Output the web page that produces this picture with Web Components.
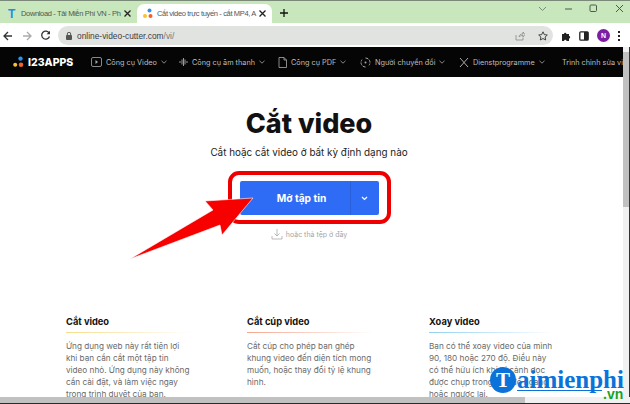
<!DOCTYPE html>
<html>
<head>
<meta charset="utf-8">
<style>
  html, body { margin: 0; padding: 0; width: 630px; height: 404px; overflow: hidden; background: #fff; }
  body { font-family: Inter, "Noto Sans", sans-serif; position: relative; }
</style>
</head>
<body>
<browser-window>
  <tab-strip></tab-strip>
  <address-bar></address-bar>
  <div style="display:flex;flex:1;min-height:0">
    <div style="flex:1;min-width:0;overflow:hidden">
      <site-nav></site-nav>
      <hero-panel></hero-panel>
      <info-columns></info-columns>
    </div>
    <v-scroll></v-scroll>
  </div>
  <h-scroll></h-scroll>
</browser-window>
<call-out></call-out>
<brand-mark></brand-mark>

<script>
class BrowserWindow extends HTMLElement {
  connectedCallback() {
    this.attachShadow({ mode: 'open' });
    this.shadowRoot.innerHTML = `
      <style>
        :host { display: flex; flex-direction: column; width: 630px; height: 404px; overflow: hidden; background: #fff; border-top: 1px solid #7b8a78; box-sizing: border-box; }
      </style>
      <slot></slot>`;
  }
}

class TabStrip extends HTMLElement {
  connectedCallback() {
    this.attachShadow({ mode: 'open' });
    const close = `<svg width="9" height="9" viewBox="0 0 9 9"><path d="M1.500 1.500l6 6M7.500 1.500l-6 6" stroke="#222" stroke-width="1.300"/></svg>`;
    this.shadowRoot.innerHTML = `
      <style>
        :host { display: flex; height: 22px; background: #c9e7bd; align-items: flex-end; flex: none; color: #4c5a4e; font: 7.500px "Liberation Sans", sans-serif; letter-spacing: -.35px; }
        .tab { height: 19px; display: flex; align-items: center; box-sizing: border-box; white-space: nowrap; }
        .first { width: 137px; padding: 0 5px 0 8px; }
        .on { width: 135px; padding: 0 5px 0 6px; background: #fff; border-radius: 7px 7px 0 0; color: #50565a; }
        .t { flex: 1; overflow: hidden; }
        .fav-t { color: #1b8fe6; font: bold 12px "Liberation Sans", sans-serif; width: 13px; flex: none; }
        .on svg:first-child { margin-right: 4px; }
        .plus { margin: 0 0 3px 8px; height: 15px; }
        .sp { flex: 1; }
        .ctl { display: flex; align-items: center; gap: 16.500px; height: 15px; align-self: flex-start; padding-right: 6.500px; }
        svg { display: block; flex: none; }
      </style>
      <div class="tab first">
        <span class="fav-t">T</span><span class="t">Download - Tải Miễn Phí VN - Ph</span>${close}
      </div>
      <div class="tab on">
        <svg width="10" height="12" viewBox="0 0 10 12"><circle cx="6.500" cy="2.500" r="2" fill="#2e90f0"/><circle cx="2" cy="8" r="2" fill="#f7c32e"/><circle cx="7.500" cy="8" r="2" fill="#f2602d"/></svg>
        <span class="t">Cắt video trực tuyến - cắt MP4, A</span>${close}
      </div>
      <div class="plus">
        <svg width="8" height="8" viewBox="0 0 8 8" style="margin:4px 0 0 0"><path d="M4 0v8M0 4h8" stroke="#111" stroke-width="1.300"/></svg>
      </div>
      <div class="sp"></div>
      <div class="ctl">
        <svg width="9" height="6" viewBox="0 0 9 6"><path d="M1 1l3.500 3.500L8 1" fill="none" stroke="#7b8a78" stroke-width="1"/></svg>
        <svg width="9" height="2" viewBox="0 0 9 2"><path d="M1 1h7" stroke="#4b5a4c" stroke-width="1"/></svg>
        <svg width="9" height="9" viewBox="0 0 9 9"><rect x="1" y="1" width="6.500" height="6.500" rx="1" fill="none" stroke="#4b5a4c"/></svg>
        <svg width="9" height="9" viewBox="0 0 9 9"><path d="M1 1l7 7M8 1L1 8" stroke="#4b5a4c" stroke-width="1"/></svg>
      </div>`;
  }
}

class AddressBar extends HTMLElement {
  connectedCallback() {
    this.attachShadow({ mode: 'open' });
    this.shadowRoot.innerHTML = `
      <style>
        :host { display: flex; align-items: center; height: 24px; background: #fff; flex: none; padding: 3px 8px 2px 3px; box-sizing: border-box; }
        svg { display: block; flex: none; }
        .arrows { display: flex; align-items: center; gap: 9px; width: 55px; }
        .omni { width: 495px; height: 19px; border-radius: 10px; background: #e1e3e1; display: flex; align-items: center; padding: 0 5px 0 8px; box-sizing: border-box; gap: 5px; font: 8.400px "Liberation Sans", sans-serif; color: #3c4043; }
        .omni i { font-style: normal; color: #70757a; }
        .sp { flex: 1; }
        .tools { display: flex; align-items: center; gap: 8px; margin-left: 8px; }
        .av { width: 13px; height: 13px; border-radius: 50%; background: #7b1fa2; color: #fff; font: bold 7px/13px "Liberation Sans", sans-serif; text-align: center; }
        .dots { width: 2px; height: 10px; background: radial-gradient(circle at 1px 1px, #222 1px, transparent 1.100px) 0 0/2px 4px; }
      </style>
      <div class="arrows">
        <svg width="10" height="10" viewBox="0 0 10 10"><path d="M9 5H1.500M5 1L1 5l4 4" fill="none" stroke="#333" stroke-width="1.300"/></svg>
        <svg width="10" height="10" viewBox="0 0 10 10"><path d="M1 5h7.500M5 1l4 4-4 4" fill="none" stroke="#a9adaa" stroke-width="1.300"/></svg>
        <svg width="11" height="11" viewBox="0 0 11 11" style="margin-left:-1px"><path d="M9.200 3.200A4 4 0 1 0 9.500 6.500" fill="none" stroke="#333" stroke-width="1.300"/><path d="M10 .800v3.400H6.600z" fill="#333"/></svg>
      </div>
      <div class="omni">
        <svg width="6" height="8" viewBox="0 0 6 8"><rect y="3" width="6" height="5" rx="1" fill="#555"/><path d="M1.300 3.500V2a1.700 1.700 0 0 1 3.400 0v1.500" fill="none" stroke="#555"/></svg>
        <span>online-video-cutter.com<i>/vi/</i></span>
        <span class="sp"></span>
        <svg width="10" height="10" viewBox="0 0 10 10" style="margin-right:8px"><path d="M1 4v5h7V6.500M4 6c0-2 1.500-3 4-3V1l2 2.500L8 6V4.500C6 4.500 5 5 4 6z" fill="none" stroke="#888" stroke-width=".8"/></svg>
        <svg width="10" height="10" viewBox="0 0 10 10"><path d="M5 .800l1.300 2.800 3 .4-2.200 2 .6 3L5 7.500 2.300 9l.6-3L.7 4l3-.4z" fill="none" stroke="#444" stroke-width="1"/></svg>
      </div>
      <div class="tools">
        <svg width="10" height="10" viewBox="0 0 10 10"><path d="M1 3h2a1.200 1.200 0 1 1 2.400 0H8v2a1.200 1.200 0 1 1 0 2.400V10H5.500a1.200 1.200 0 1 0-2.400 0H1z" fill="#222"/></svg>
        <svg width="10" height="10" viewBox="0 0 10 10"><rect x=".8" y=".8" width="8.400" height="8.400" rx="1" fill="#fff" stroke="#222" stroke-width="1.300"/><rect x="5" y="1" width="4" height="8" fill="#222"/></svg>
        <div class="av">N</div>
        <div class="dots"></div>
      </div>`;
  }
}

class SiteNav extends HTMLElement {
  connectedCallback() {
    this.attachShadow({ mode: 'open' });
    const chev = `<svg width="6" height="4" viewBox="0 0 6 4"><path d="M.5.800L3 3.200 5.500.800" fill="none" stroke="#aaa" stroke-width=".8"/></svg>`;
    this.shadowRoot.innerHTML = `
      <style>
        :host { display: flex; align-items: center; height: 30px; background: #050505; color: #bdbdbd; font: 7.300px Inter, sans-serif; overflow: hidden; white-space: nowrap; padding-left: 13px; }
        svg { display: block; flex: none; }
        .logo { display: flex; align-items: center; gap: 4px; color: #fff; font: 800 10.500px Inter, sans-serif; width: 78px; flex: none; }
        .item { display: flex; align-items: center; gap: 4px; flex: none; }
      </style>
      <div class="logo">
        <svg width="11" height="12" viewBox="0 0 11 12"><circle cx="7.500" cy="2.600" r="2.200" fill="#2e90f0"/><circle cx="2.200" cy="8.800" r="2" fill="#f7c32e"/><circle cx="8" cy="8.800" r="2.300" fill="#f2602d"/></svg>
        <span>I23APPS</span>
      </div>
      <div class="item" style="width:88px"><svg width="11" height="10" viewBox="0 0 11 10"><rect x=".5" y=".5" width="10" height="9" rx="1.500" fill="none" stroke="#aaa" stroke-width=".8"/><path d="M4.500 3l2.500 2-2.500 2z" fill="#aaa"/></svg>Công cụ Video ${chev}</div>
      <div class="item" style="width:99px"><svg width="9" height="10" viewBox="0 0 9 10"><path d="M1 4v2M3 2.500v5M4.500 1v8M6 2.500v5M8 4v2" stroke="#999" stroke-width="1"/></svg>Công cụ âm thanh ${chev}</div>
      <div class="item" style="width:82px"><svg width="9" height="11" viewBox="0 0 9 11"><path d="M1 .500h5l2.500 2.500v7.500H1zM6 .500V3h2.500" fill="none" stroke="#aaa" stroke-width=".8"/></svg>Công cụ PDF ${chev}</div>
      <div class="item" style="width:99px"><svg width="11" height="11" viewBox="0 0 11 11"><path d="M5.500 1a4.500 4.500 0 0 1 3.500 7.300M5.500 10A4.500 4.500 0 0 1 2 2.700" fill="none" stroke="#aaa" stroke-dasharray="3 1"/><circle cx="5.500" cy="5.500" r="1" fill="#aaa"/></svg>Người chuyển đổi ${chev}</div>
      <div class="item" style="width:103px"><svg width="10" height="11" viewBox="0 0 10 11"><path d="M1 1l8 9M9 1L1 10" stroke="#aaa" stroke-width="1"/></svg>Dienstprogramme ${chev}</div>
      <div class="item">Trình chỉnh sửa vid</div>`;
  }
}

class HeroPanel extends HTMLElement {
  connectedCallback() {
    this.attachShadow({ mode: 'open' });
    this.shadowRoot.innerHTML = `
      <style>
        :host { display: flex; flex-direction: column; align-items: center; padding: 29px 5px 0 0; color: #111; }
        h1 { margin: 0; font: 800 27px/36px Inter, sans-serif; }
        p { margin: 3px 0 0; font: 9.900px/14px Inter, sans-serif; color: #222; }
        .btn { margin-top: 22px; width: 139px; height: 34px; background: #2f6cf6; border-radius: 2px; display: flex; color: #fff; font: 700 10.200px/34px Inter, sans-serif; text-align: center; }
        .btn b { flex: 1; font-weight: 700; padding-left: 14px; }
        .btn span { width: 28px; border-left: 1px solid #2a60dc; display: flex; align-items: center; justify-content: center; }
        .drop { margin-top: 13px; display: flex; align-items: center; gap: 3px; font: 7px Inter, sans-serif; color: #a6a6a6; height: 12px; }
        svg { display: block; }
      </style>
      <h1>Cắt video</h1>
      <p>Cắt hoặc cắt video ở bất kỳ định dạng nào</p>
      <div class="btn"><b>Mở tập tin</b><span><svg width="7" height="5" viewBox="0 0 7 5"><path d="M1 1l2.500 2.500L6 1" fill="none" stroke="#fff" stroke-width="1.200"/></svg></span></div>
      <div class="drop"><svg width="12" height="12" viewBox="0 0 12 12"><path d="M6 1v7M3.500 5.500L6 8l2.500-2.500M1 8v3h10V8" fill="none" stroke="#aaa" stroke-width=".8"/></svg>hoặc thả tệp ở đây</div>`;
  }
}

class InfoColumns extends HTMLElement {
  connectedCallback() {
    this.attachShadow({ mode: 'open' });
    this.shadowRoot.innerHTML = `
      <style>
        :host { display: grid; grid-template-columns: 124px 125px 125px; column-gap: 57px; padding: 75px 0 0 66px; }
      </style>
      <slot></slot>`;
    this.innerHTML = `
      <info-col heading="Cắt video" tone="#f7dc8a">Ứng dụng web này rất tiện lợi<br>khi bạn cần cắt một tập tin<br>video nhỏ. Ứng dụng này không<br>cần cài đặt, và làm việc ngay<br>trong trình duyệt của bạn.</info-col>
      <info-col heading="Cắt cúp video" tone="#f6a58e">Cắt cúp cho phép bạn ghép<br>khung video đến diện tích mong<br>muốn, hoặc thay đổi tỷ lệ khung<br>hình.</info-col>
      <info-col heading="Xoay video" tone="#8fd0f2">Bạn có thể xoay video của mình<br>90, 180 hoặc 270 độ. Điều này<br>có thể hữu ích khi bị cảnh dọc<br>được chụp trong chế độ ngang<br>hoặc ngược lại.</info-col>`;
  }
}

class InfoCol extends HTMLElement {
  connectedCallback() {
    const tone = this.getAttribute('tone');
    this.attachShadow({ mode: 'open' });
    this.shadowRoot.innerHTML = `
      <style>
        :host { display: block; }
        h3 { margin: 0; font: 700 9.300px/14px Inter, sans-serif; color: #111; padding-bottom: 3px; border-bottom: 1px solid transparent; border-image: linear-gradient(90deg, ${tone}, #fff) 1; }
        div { margin-top: 7px; font: 8.200px/12px Inter, sans-serif; color: #6a6a6a; white-space: nowrap; }
      </style>
      <h3>${this.getAttribute('heading')}</h3>
      <div><slot></slot></div>`;
  }
}

class VScroll extends HTMLElement {
  connectedCallback() {
    this.attachShadow({ mode: 'open' });
    this.shadowRoot.innerHTML = `
      <style>
        :host { display: block; width: 6px; flex: none; background: #f1f1f1; border-right: 1px solid #333; padding-top: 5px; }
        div { height: 155px; background: #c1c1c1; }
      </style>
      <div></div>`;
  }
}

class HScroll extends HTMLElement {
  connectedCallback() {
    this.attachShadow({ mode: 'open' });
    this.shadowRoot.innerHTML = `
      <style>
        :host { display: block; height: 7px; flex: none; background: #f1f1f1; border-bottom: 1px solid #2a2a2a; box-sizing: border-box; }
        div { width: 525px; height: 100%; background: #c1c1c1; }
      </style>
      <div></div>`;
  }
}

class CallOut extends HTMLElement {
  connectedCallback() {
    this.attachShadow({ mode: 'open' });
    this.shadowRoot.innerHTML = `
      <style>
        :host { position: absolute; left: 0; top: 0; width: 630px; height: 404px; pointer-events: none; }
        .ring { position: absolute; left: 228px; top: 171px; width: 163px; height: 53px; box-sizing: border-box; border: 4.500px solid #ee0000; border-radius: 11px; }
        svg { position: absolute; left: 0; top: 0; }
      </style>
      <div class="ring"></div>
      <svg width="630" height="404"><path d="M253 198L222 235L220 225L130 259L213 210L205 201Z" fill="#f60000" stroke="#fff" stroke-width=".6" stroke-linejoin="miter"/></svg>`;
  }
}

class BrandMark extends HTMLElement {
  connectedCallback() {
    this.attachShadow({ mode: 'open' });
    this.shadowRoot.innerHTML = `
      <style>
        :host { position: absolute; left: 490px; top: 366px; width: 140px; height: 38px; }
        .t { position: absolute; left: 0; top: 1px; width: 26px; height: 26px; border-radius: 50%; background: #0b72d9; color: #fff; font: bold 21px/26px "Liberation Serif", serif; text-align: center; }
        .w { position: absolute; left: 27px; top: 1px; width: 85px; height: 23px; border-bottom: 1px solid #0b72d9; font: 700 25px/25px "Liberation Serif", serif; color: #0b72d9; white-space: nowrap; }
        .v { position: absolute; left: 113px; top: 21px; font: 700 14px/14px "Liberation Sans", sans-serif; color: #19a31f; }
      </style>
      <div class="t">T</div>
      <div class="w">aimienphi</div>
      <div class="v">.vn</div>`;
  }
}

customElements.define('browser-window', BrowserWindow);
customElements.define('tab-strip', TabStrip);
customElements.define('address-bar', AddressBar);
customElements.define('site-nav', SiteNav);
customElements.define('hero-panel', HeroPanel);
customElements.define('info-columns', InfoColumns);
customElements.define('info-col', InfoCol);
customElements.define('v-scroll', VScroll);
customElements.define('h-scroll', HScroll);
customElements.define('call-out', CallOut);
customElements.define('brand-mark', BrandMark);
</script>
</body>
</html>
